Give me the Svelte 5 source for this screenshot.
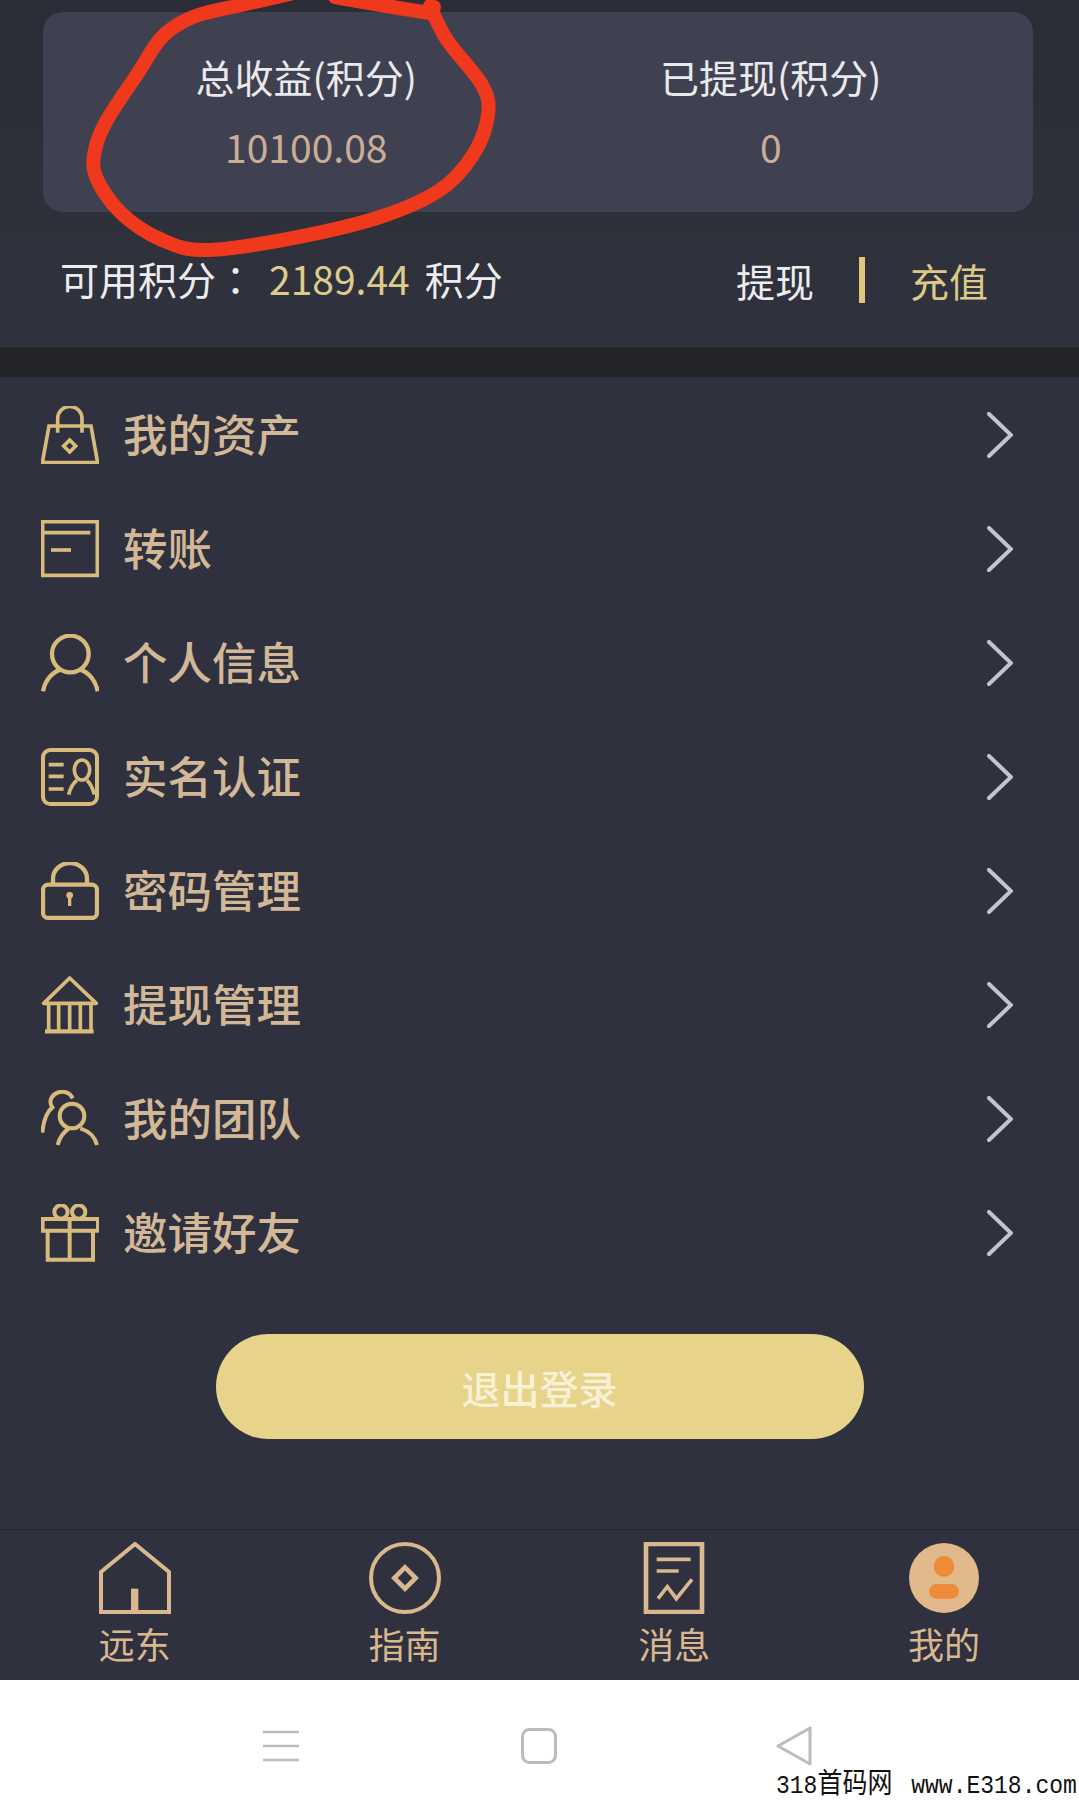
<script>
  const menu = [
    { icon: 'bag', label: '我的资产' },
    { icon: 'card', label: '转账' },
    { icon: 'person', label: '个人信息' },
    { icon: 'id', label: '实名认证' },
    { icon: 'lock', label: '密码管理' },
    { icon: 'bank', label: '提现管理' },
    { icon: 'team', label: '我的团队' },
    { icon: 'gift', label: '邀请好友' }
  ];

  const tabs = [
    { icon: 'home', label: '远东' },
    { icon: 'guide', label: '指南' },
    { icon: 'news', label: '消息' },
    { icon: 'mine', label: '我的' }
  ];

  // hand-drawn circle over the first stat
  const circle = [
    [430, 6], [447, 40], [482, 85], [488, 115], [473, 155], [440, 190], [380, 217],
    [293, 238], [207, 250], [162, 240], [121, 213], [96, 177], [95, 150], [107, 120],
    [138, 73], [162, 37], [193, 17], [241, 5], [290, -6]
  ];

  // catmull-rom through the points
  function smooth(p) {
    let d = `M${p[0][0]} ${p[0][1]}`;
    for (let i = 0; i < p.length - 1; i++) {
      const a = p[Math.max(i - 1, 0)];
      const b = p[i];
      const c = p[i + 1];
      const e = p[Math.min(i + 2, p.length - 1)];
      d += ` C${b[0] + (c[0] - a[0]) / 6} ${b[1] + (c[1] - a[1]) / 6} ${c[0] - (e[0] - b[0]) / 6} ${c[1] - (e[1] - b[1]) / 6} ${c[0]} ${c[1]}`;
    }
    return d;
  }
</script>

{#snippet menuIcon(name)}
  <svg class="menu-icon" viewBox="0 0 174 174" fill="none" stroke="currentColor" stroke-width="11">
    {#if name === 'bag'}
      <path d="M24 60H150L170 170H4Z" />
      <path d="M50 80V38a36 36 0 0 1 73 0V80" />
      <path d="M86 102L104 120L86 138L68 120Z" />
    {:else if name === 'card'}
      <path d="M5 5H169V166H5Z" />
      <path d="M5 38H148" />
      <path d="M30 90H90" />
    {:else if name === 'person'}
      <circle cx="88" cy="60" r="55" stroke-width="13" />
      <path d="M6 172C12 138 34 114 60 106M170 172C164 138 142 114 116 106" stroke-width="13" />
    {:else if name === 'id'}
      <rect x="6" y="6" width="162" height="162" rx="22" stroke-width="12" />
      <path d="M23 50H68M23 85H68M23 123H68" />
      <ellipse cx="123" cy="66" rx="23" ry="30" />
      <path d="M83 140C88 120 97 105 108 97M160 140C155 120 148 106 138 97" />
    {:else if name === 'lock'}
      <rect x="6" y="68" width="162" height="100" rx="16" stroke-width="13" />
      <path d="M36 68V50a50 46 0 0 1 102 0V68" stroke-width="13" />
      <circle cx="86" cy="100" r="10" fill="currentColor" stroke="none" />
      <path d="M86 100V132" stroke-width="10" />
    {:else if name === 'bank'}
      <path d="M86 6L8 82H166Z" stroke-linejoin="round" />
      <path d="M23 82V165M53 82V165M86 82V165M118 82V165M150 82V165" />
      <path d="M12 166H158" stroke-width="13" />
    {:else if name === 'team'}
      <circle cx="93" cy="78" r="37" stroke-width="12" />
      <path d="M50 165C56 142 68 126 82 117M168 165C162 142 150 126 118 115" stroke-width="12" />
      <path d="M95 25C85 4 60 0 42 12C28 22 24 38 34 52C18 65 8 85 4 128" stroke-width="12" />
    {:else if name === 'gift'}
      <path d="M5 45H171V80H5Z" stroke-width="12" />
      <path d="M20 80V167H156V80" stroke-width="12" />
      <path d="M86 45V167" stroke-width="12" />
      <circle cx="60" cy="24" r="20" stroke-width="12" />
      <circle cx="113" cy="24" r="20" stroke-width="12" />
    {/if}
  </svg>
{/snippet}

{#snippet tabIcon(name)}
  <svg class="tab-icon" viewBox="0 0 216 216" fill="none" stroke="currentColor" stroke-width="12">
    {#if name === 'home'}
      <path d="M6 210V90L108 6L210 90V210Z" />
      <rect x="96" y="140" width="22" height="66" fill="currentColor" stroke="none" />
    {:else if name === 'guide'}
      <circle cx="108" cy="108" r="102" />
      <path d="M108 76L140 108L108 140L76 108Z" stroke-width="14" />
    {:else if name === 'news'}
      <path d="M24 6H192V210H24Z" stroke-width="14" />
      <path d="M56 52H158M56 87H122" stroke-width="11" />
      <path d="M60 170L88 134L115 170L162 112" stroke-width="11" />
    {:else if name === 'mine'}
      <circle class="avatar" cx="108" cy="108" r="105" stroke="none" />
      <circle cx="108" cy="73" r="31" fill="#ee8a38" stroke="none" />
      <rect x="63" y="126" width="90" height="44" rx="22" fill="#ee8a38" stroke="none" />
    {/if}
  </svg>
{/snippet}

<div class="page">
  <section class="summary">
    <div class="stats">
      <div class="stat">
        <div class="stat-label">总收益(积分)</div>
        <div class="stat-value">10100.08</div>
      </div>
      <div class="stat">
        <div class="stat-label">已提现(积分)</div>
        <div class="stat-value">0</div>
      </div>
    </div>
    <div class="balance">
      <div class="balance-text">可用积分<span class="colon">：</span><span class="amount">2189.44</span>积分</div>
      <div class="actions">
        <span>提现</span>
        <i class="divider"></i>
        <span class="recharge">充值</span>
      </div>
    </div>
  </section>

  <div class="band"></div>

  <ul class="menu">
    {#each menu as item}
      <li class="menu-row">
        {@render menuIcon(item.icon)}
        <span class="menu-label">{item.label}</span>
        <svg class="chevron" viewBox="0 0 26 46" fill="none" stroke="currentColor" stroke-width="4" stroke-linecap="round">
          <path d="M2 2L24 23L2 44" />
        </svg>
      </li>
    {/each}
  </ul>

  <div class="logout-wrap">
    <button class="logout">退出登录</button>
  </div>

  <nav class="tabs">
    {#each tabs as tab}
      <div class="tab">
        {@render tabIcon(tab.icon)}
        <span>{tab.label}</span>
      </div>
    {/each}
  </nav>

  <div class="system-nav">
    <svg class="sys-menu" viewBox="0 0 36 32" fill="none" stroke="#bcbcbc" stroke-width="2.6">
      <path d="M0 2H36M0 16H36M0 30H36" />
    </svg>
    <svg class="sys-home" viewBox="0 0 36 36" fill="none" stroke="#bcbcbc" stroke-width="3">
      <rect x="1.5" y="1.5" width="33" height="33" rx="7" />
    </svg>
    <svg class="sys-back" viewBox="0 0 36 40" fill="none" stroke="#bcbcbc" stroke-width="3" stroke-linejoin="round">
      <path d="M34 2V38L2 20Z" />
    </svg>
  </div>

  <svg class="scribble" viewBox="0 0 540 270" fill="none" stroke="#f0391c" stroke-width="14" stroke-linecap="round">
    <path d={smooth(circle)} />
    <path d="M335 -3Q385 6 430 13" />
    <circle cx="434" cy="7" r="7" fill="#f0391c" stroke="none" />
  </svg>

  <div class="watermark">318<span class="watermark-cjk">首码网</span> www.E318.com</div>
</div>

<style>
  .page {
    position: relative;
    width: 1079px;
    height: 1801px;
    overflow: hidden;
    background: #fff;
    font-family: "Noto Sans CJK SC", "Noto Sans", sans-serif;
  }

  .summary {
    height: 347px;
    box-sizing: border-box;
    padding-top: 12px;
    background: linear-gradient(#2a2d35, #30323d);
  }

  .stats {
    display: grid;
    grid-template-columns: 1fr 1fr;
    height: 200px;
    margin: 0 46px 0 43px;
    padding: 0 30px 0 31px;
    box-sizing: border-box;
    background: #3f4150;
    border-radius: 20px;
  }

  .stat {
    text-align: center;
    padding-top: 38px;
  }

  .stat-label {
    font-size: 39px;
    line-height: 52px;
    color: #e9e9ee;
  }

  .stat-value {
    margin-top: 19px;
    font-size: 39px;
    line-height: 50px;
    color: #c9ae95;
  }

  .balance {
    display: flex;
    justify-content: space-between;
    align-items: center;
    height: 135px;
    padding: 0 91px 0 60px;
  }

  .balance-text {
    padding-bottom: 3px;
    font-size: 39px;
    color: #ececef;
  }

  .colon {
    font-family: "Noto Sans CJK TC", sans-serif;
  }

  .amount {
    margin: 0 15px 0 14px;
    color: #dccb8c;
  }

  .actions {
    display: flex;
    align-items: center;
    gap: 45px;
    font-size: 39px;
    color: #ececef;
  }

  .divider {
    width: 6px;
    height: 46px;
    background: #e2c67f;
  }

  .recharge {
    color: #dcc98a;
  }

  .band {
    height: 30px;
    background: #232428;
  }

  .menu {
    list-style: none;
    margin: 0;
    padding: 1px 0 0;
    background: #2f313e;
  }

  .menu-row {
    display: flex;
    align-items: center;
    gap: 24px;
    height: 114px;
    padding: 0 66px 0 41px;
  }

  .menu-icon {
    width: 58px;
    height: 58px;
    color: #d8bb7c;
  }

  .menu-label {
    flex: 1;
    padding-bottom: 5px;
    font-size: 44.5px;
    font-weight: 500;
    color: #d3b898;
  }

  .chevron {
    width: 26px;
    height: 46px;
    color: #c3c5cb;
  }

  .logout-wrap {
    display: flex;
    justify-content: center;
    height: 239px;
    padding-top: 44px;
    box-sizing: border-box;
    background: #2f313e;
  }

  .logout {
    width: 648px;
    height: 105px;
    border: 0;
    border-radius: 53px;
    background: #e7d389;
    color: #f8f1d6;
    font: inherit;
    font-size: 39px;
    font-weight: 500;
  }

  .tabs {
    display: grid;
    grid-template-columns: repeat(4, 1fr);
    height: 151px;
    box-sizing: border-box;
    padding-top: 12px;
    border-top: 1px solid #262832;
    background: #2f313e;
  }

  .tab {
    display: flex;
    flex-direction: column;
    align-items: center;
    color: #d9b78f;
    font-size: 36px;
    line-height: 46px;
  }

  .tab-icon {
    width: 72px;
    height: 72px;
    margin-bottom: 6px;
  }

  .avatar {
    fill: #e2b98a;
  }

  .system-nav {
    position: relative;
    height: 122px;
    background: #fff;
  }

  .sys-menu,
  .sys-home,
  .sys-back {
    position: absolute;
  }

  .sys-menu {
    left: 263px;
    top: 50px;
    width: 36px;
    height: 32px;
  }

  .sys-home {
    left: 521px;
    top: 48px;
    width: 36px;
    height: 36px;
  }

  .sys-back {
    left: 776px;
    top: 46px;
    width: 36px;
    height: 40px;
  }

  .scribble {
    position: absolute;
    left: 0;
    top: 0;
    width: 540px;
    height: 270px;
  }

  .watermark {
    position: absolute;
    left: 776px;
    bottom: 0;
    white-space: nowrap;
    font-family: "Liberation Mono", "Noto Sans CJK SC", monospace;
    font-size: 23px;
    line-height: 26px;
    color: #111;
    transform: scaleY(1.15);
    transform-origin: bottom;
  }

  .watermark-cjk {
    margin-right: 5px;
    font-size: 25px;
    line-height: 20px;
  }
</style>
